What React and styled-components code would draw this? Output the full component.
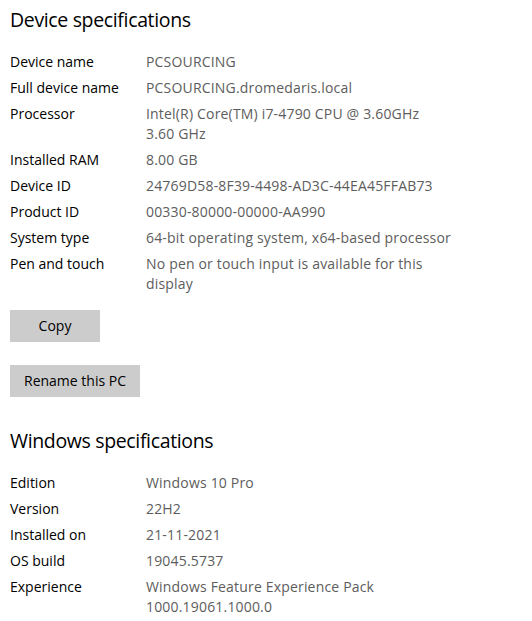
import React from "react";
import styled, { createGlobalStyle } from "styled-components";

const Global = createGlobalStyle`
  html, body { margin: 0; padding: 0; background: #ffffff; }
  body { font-family: "Segoe UI", "Open Sans", "Noto Sans", sans-serif; -webkit-font-smoothing: antialiased; }
`;

const Page = styled.div`
  display: flex;
  flex-direction: column;
  padding: 6px 10px 0 10px;
`;

const Heading = styled.h2`
  margin: ${(p) => p.$top || 0}px 0 18px 0;
  font-size: 19.5px;
  letter-spacing: -0.35px;
  font-weight: 400;
  line-height: 28px;
  color: #000;
`;

const List = styled.div`
  display: flex;
  flex-direction: column;
  gap: 6px;
`;

const Row = styled.div`
  display: grid;
  grid-template-columns: 136px 1fr;
  font-size: 14px;
  line-height: 20px;
`;

const Label = styled.div`
  color: #000;
`;

const Value = styled.div`
  color: #5d5d5d;
  letter-spacing: 0.18px;
  max-width: 310px;
`;

const Button = styled.button`
  align-self: flex-start;
  margin-top: ${(p) => p.$top}px;
  min-width: 90px;
  height: 32px;
  padding: 0 14px;
  border: none;
  background: #cccccc;
  color: #000;
  font-family: inherit;
  font-size: 14px;
  line-height: 20px;
`;

const device = [
  ["Device name", "PCSOURCING"],
  ["Full device name", "PCSOURCING.dromedaris.local"],
  ["Processor", ["Intel(R) Core(TM) i7-4790 CPU @ 3.60GHz", "3.60 GHz"]],
  ["Installed RAM", "8.00 GB"],
  ["Device ID", "24769D58-8F39-4498-AD3C-44EA45FFAB73"],
  ["Product ID", "00330-80000-00000-AA990"],
  ["System type", "64-bit operating system, x64-based processor"],
  ["Pen and touch", ["No pen or touch input is available for this", "display"]],
];

const windows = [
  ["Edition", "Windows 10 Pro"],
  ["Version", "22H2"],
  ["Installed on", "21-11-2021"],
  ["OS build", "19045.5737"],
  ["Experience", ["Windows Feature Experience Pack", "1000.19061.1000.0"]],
];

function Specs({ rows }) {
  return (
    <List>
      {rows.map(([k, v]) => (
        <Row key={k}>
          <Label>{k}</Label>
          <Value>
            {Array.isArray(v)
              ? v.map((line) => <div key={line}>{line}</div>)
              : v}
          </Value>
        </Row>
      ))}
    </List>
  );
}

export default function App() {
  return (
    <Page>
      <Global />
      <Heading>Device specifications</Heading>
      <Specs rows={device} />
      <Button $top={16}>Copy</Button>
      <Button $top={23}>Rename this PC</Button>
      <Heading $top={30}>Windows specifications</Heading>
      <Specs rows={windows} />
    </Page>
  );
}
